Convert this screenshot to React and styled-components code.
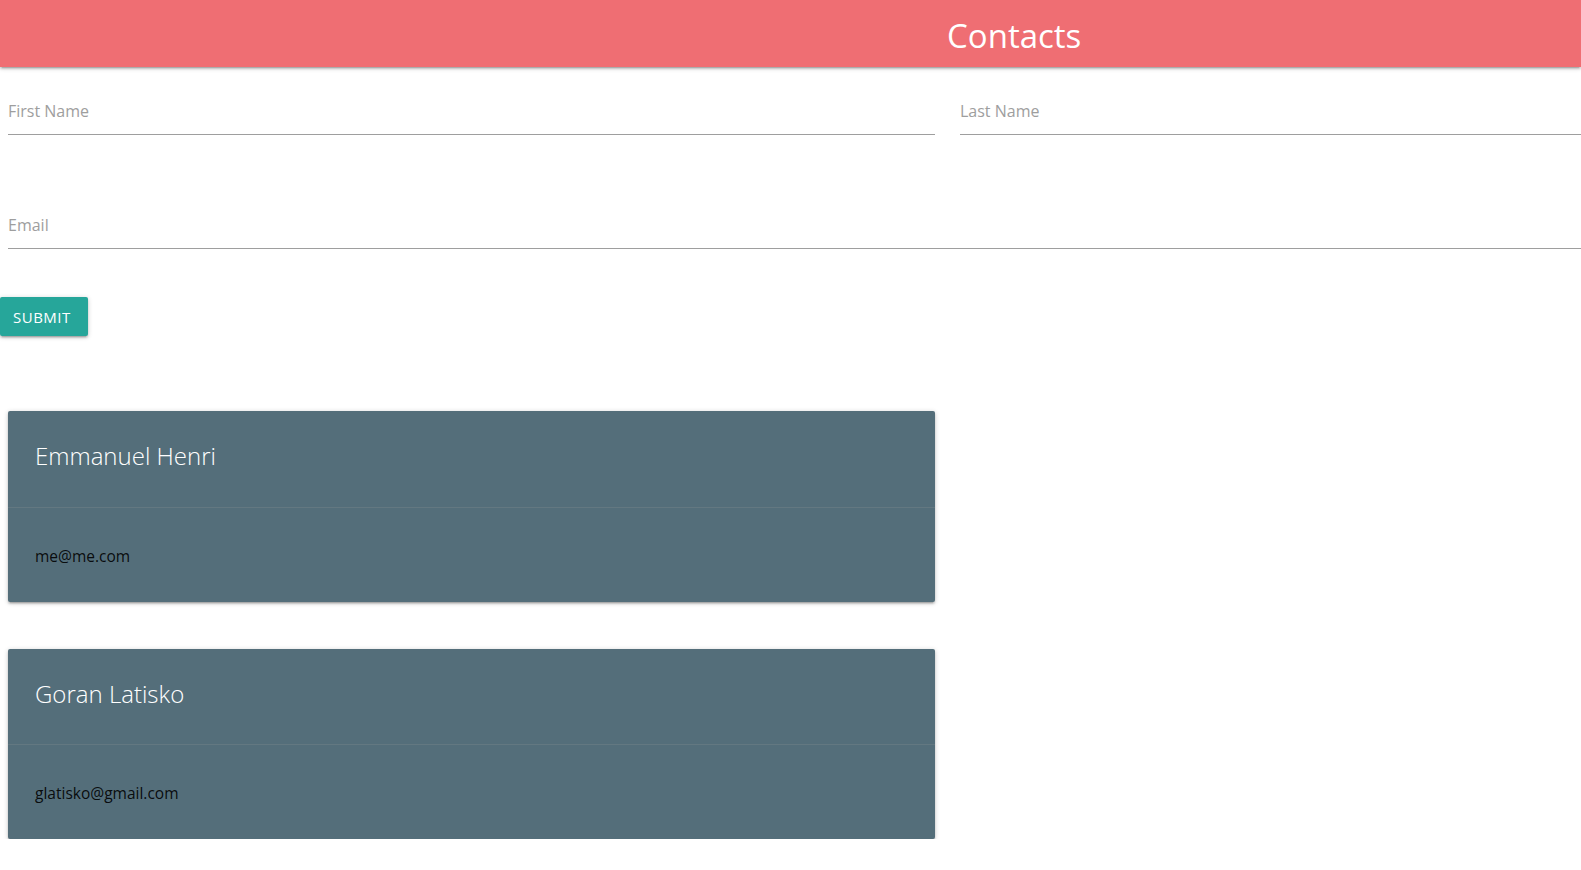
import React, { useState } from 'react';
import styled, { createGlobalStyle } from 'styled-components';

const GlobalStyle = createGlobalStyle`
  html, body {
    margin: 0;
    padding: 0;
    background: #ffffff;
    font-family: "Open Sans", "Noto Sans", sans-serif;
    color: rgba(0, 0, 0, 0.87);
    overflow-x: hidden;
  }
`;

const shadow = `0 2px 2px 0 rgba(0,0,0,0.14), 0 3px 1px -2px rgba(0,0,0,0.12), 0 1px 5px 0 rgba(0,0,0,0.2)`;

const Header = styled.header`
  height: 67px;
  background-color: #ef6e73;
  box-shadow: ${shadow};
  padding-left: 947px;
  display: flex;
  align-items: center;
`;

const Title = styled.h1`
  margin: 0;
  font-size: 33px;
  font-weight: 400;
  color: #ffffff;
  line-height: 1;
  padding-top: 3px;
`;

const Form = styled.form`
  padding: 20px 0 0 8px;
  display: grid;
  grid-template-columns: 927px 1fr;
  column-gap: 25px;
  row-gap: 66px;
`;

const Input = styled.input`
  box-sizing: border-box;
  height: 48px;
  width: 100%;
  padding: 0;
  border: none;
  border-bottom: 1px solid #9e9e9e;
  outline: none;
  background: transparent;
  font-family: inherit;
  font-size: 16px;
  color: rgba(0, 0, 0, 0.87);
  grid-column: ${(p) => (p.$wide ? '1 / -1' : 'auto')};

  &::placeholder {
    color: #9e9e9e;
  }
`;

const SubmitButton = styled.button`
  display: block;
  margin-top: 48px;
  height: 39px;
  padding: 0 17px 0 13px;
  border: none;
  border-radius: 2px;
  background-color: #26a69a;
  color: #ffffff;
  font-family: inherit;
  font-size: 15px;
  letter-spacing: 0.5px;
  text-transform: uppercase;
  box-shadow: ${shadow};
  cursor: pointer;
`;

const CardList = styled.div`
  padding: 75px 0 0 8px;
  width: 927px;
  display: flex;
  flex-direction: column;
  gap: 47px;
`;

const Card = styled.div`
  background-color: #546e7a;
  border-radius: 2px;
  box-shadow: ${shadow};
`;

const CardContent = styled.div`
  box-sizing: border-box;
  height: ${(p) => p.$height}px;
  padding: 26px 27px 0;
  border-bottom: 1px solid rgba(160, 160, 160, 0.2);
`;

const CardTitle = styled.span`
  display: block;
  font-size: 24px;
  font-weight: 300;
  line-height: 37px;
  color: #ffffff;
`;

const CardAction = styled.div`
  box-sizing: border-box;
  height: ${(p) => p.$height}px;
  padding: 36px 27px 0;
  font-size: 15.5px;
  line-height: 24px;
  color: rgba(0, 0, 0, 0.9);
`;

const contacts = [
  { firstName: 'Emmanuel', lastName: 'Henri', email: 'me@me.com', top: 97, bottom: 94 },
  { firstName: 'Goran', lastName: 'Latisko', email: 'glatisko@gmail.com', top: 96, bottom: 94 },
];

export default function App() {
  const [form, setForm] = useState({ firstName: '', lastName: '', email: '' });

  const handleChange = (e) => {
    const { name, value } = e.target;
    setForm({ ...form, [name]: value });
  };

  return (
    <>
      <GlobalStyle />
      <Header>
        <Title>Contacts</Title>
      </Header>

      <Form onSubmit={(e) => e.preventDefault()}>
        <Input name="firstName" placeholder="First Name" value={form.firstName} onChange={handleChange} />
        <Input name="lastName" placeholder="Last Name" value={form.lastName} onChange={handleChange} />
        <Input $wide name="email" placeholder="Email" value={form.email} onChange={handleChange} />
      </Form>
      <SubmitButton type="submit">Submit</SubmitButton>

      <CardList>
        {contacts.map((c) => (
          <Card key={c.email}>
            <CardContent $height={c.top}>
              <CardTitle>{c.firstName} {c.lastName}</CardTitle>
            </CardContent>
            <CardAction $height={c.bottom}>{c.email}</CardAction>
          </Card>
        ))}
      </CardList>
    </>
  );
}
